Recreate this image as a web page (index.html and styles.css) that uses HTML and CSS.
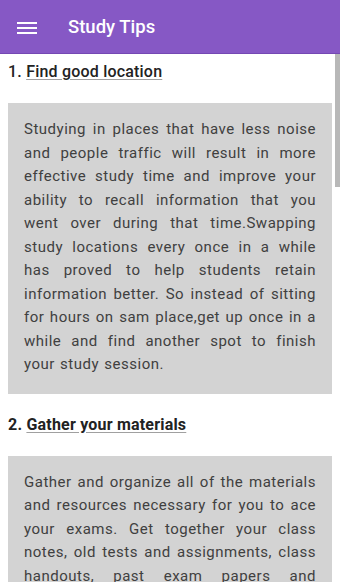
FILE: index.html
```html
<!DOCTYPE html>
<html lang="en">
<head>
  <meta charset="UTF-8">
  <meta name="viewport" content="width=device-width, initial-scale=1.0">
  <title>Study Tips</title>
  <link rel="stylesheet" href="styles.css">
</head>
<body>

  <!-- Toolbar -->
  <header class="toolbar">
    <svg class="menu-icon" width="20" height="12" viewBox="0 0 20 12">
      <rect x="0" y="0" width="20" height="2" fill="#fff"/>
      <rect x="0" y="5" width="20" height="2" fill="#fff"/>
      <rect x="0" y="10" width="20" height="2" fill="#fff"/>
    </svg>
    <span class="title">Study Tips</span>
  </header>

  <div class="scrollbar"></div>

  <main class="content">
    <h2 class="tip-title light">1. <u>Find good location</u></h2>
    <div class="tip-box">
      <p>Studying in places that have less noise and people traffic will result in more effective study time and improve your ability to recall information that you went over during that time.Swapping study locations every once in a while has proved to help students retain information better. So instead of sitting for hours on sam place,get up once in a while and find another spot to finish your study session.</p>
    </div>

    <h2 class="tip-title">2. <u>Gather your materials</u></h2>
    <div class="tip-box">
      <p>Gather and organize all of the materials and resources necessary for you to ace your exams. Get together your class notes, old tests and assignments, class handouts, past exam papers and textbooks so that you can easily find what you need while you study.</p>
    </div>
  </main>

</body>
</html>
```

FILE: styles.css
```css
body {
  margin: 0;
  font-family: Roboto, "Noto Sans", sans-serif;
  background-color: #fff;
  overflow: hidden;
}
.toolbar {
  height: 53px;
  background-color: #8658c5;
  border-bottom: 1px solid #7448b3;
  display: flex;
  align-items: center;
  padding-left: 17px;
  color: white;
}
.menu-icon {
  margin-top: 2px;
}
.title {
  margin-left: 31px;
  font-size: 18.5px;
  font-weight: 500;
}
.scrollbar {
  position: absolute;
  top: 54px;
  right: 0;
  width: 5px;
  height: 133px;
  background-color: #b8b8b8;
}
.content {
  padding: 8px 8px 0 8px;
}
.tip-title {
  margin: 0 0 21px 0;
  height: 20px;
  line-height: 20px;
  font-size: 16px;
  font-weight: 700;
  letter-spacing: 0.2px;
  color: #222;
}
.tip-title.light {
  font-weight: 500;
}
.tip-title u {
  text-decoration-color: #a0a0a0;
  text-underline-offset: 2px;
}
.tip-box {
  background-color: #d3d3d3;
  padding: 15px 16px 17px 16px;
  margin-bottom: 21px;
}
.tip-box p {
  margin: 0;
  font-size: 15px;
  letter-spacing: 0.5px;
  word-spacing: 1px;
  line-height: 23.5px;
  text-align: justify;
  color: #404040;
}
```
